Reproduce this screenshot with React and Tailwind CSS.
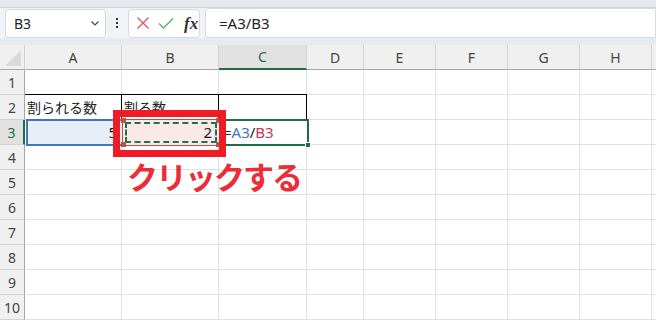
import React from 'react'

const cols = [
    { key: 'A', w: 97 },
    { key: 'B', w: 97 },
    { key: 'C', w: 88 },
    { key: 'D', w: 57 },
    { key: 'E', w: 72 },
    { key: 'F', w: 72 },
    { key: 'G', w: 72 },
    { key: 'H', w: 72 },
    { key: 'I', w: 40 },
]

const rows = [1, 2, 3, 4, 5, 6, 7, 8, 9, 10]

const template = '25px 97px 97px 88px 57px 72px 72px 72px 72px 40px'

const cellText = {
    A2: '割られる数',
    B2: '割る数',
}

const App = () => {
    return (
        <div
            className="relative w-[656px] h-[323px] overflow-hidden bg-white text-[#222]"
            style={{ fontFamily: '"Noto Sans", "Noto Sans CJK JP", sans-serif' }}
        >
            {/* top band */}
            <div className="h-[8px] bg-[#e4e7eb] border-b border-[#cfd3d8]" />

            {/* formula bar */}
            <div className="h-[30px] bg-[#f1f3f6] flex items-center">
                <div className="ml-[5px] w-[101px] h-[29px] bg-white border border-[#d6d9dd] rounded-[4px] flex items-center justify-between pl-[8px] pr-[4px]">
                    <span className="text-[14px] text-[#222]">B3</span>
                    <svg width="12" height="12" viewBox="0 0 12 12" fill="none" stroke="#444" strokeWidth="1.2">
                        <path d="M2.5 4.5 L6 8 L9.5 4.5" />
                    </svg>
                </div>
                <div className="w-[22px] flex flex-col items-center gap-[2px]">
                    <span className="w-[2px] h-[2px] bg-[#333]" />
                    <span className="w-[2px] h-[2px] bg-[#333]" />
                    <span className="w-[2px] h-[2px] bg-[#333]" />
                </div>
                <div className="w-[72px] h-[29px] bg-white border border-[#d6d9dd] rounded-[4px] flex items-center pl-[7px] gap-[8px]">
                    <svg width="14" height="14" viewBox="0 0 14 14" fill="none" stroke="#e0535b" strokeWidth="1.3">
                        <path d="M1.5 1.5 L12.5 12.5 M12.5 1.5 L1.5 12.5" />
                    </svg>
                    <svg width="16" height="14" viewBox="0 0 16 14" fill="none" stroke="#5aad6b" strokeWidth="1.3">
                        <path d="M1 7.5 L5.5 12 L15 2.5" />
                    </svg>
                    <span
                        className="text-[17px] italic font-bold text-[#333] leading-none ml-[2px]"
                        style={{ fontFamily: '"Liberation Serif", serif' }}
                    >
                        fx
                    </span>
                </div>
                <div className="ml-[5px] flex-1 h-[30px] bg-white border border-[#d6d9dd] rounded-l-[4px] flex items-center pl-[13px]">
                    <span className="text-[15px] text-[#222]">=A3/B3</span>
                </div>
            </div>

            {/* gap band */}
            <div className="h-[7px] bg-[#e7ebf0]" />

            {/* grid */}
            <div className="grid" style={{ gridTemplateColumns: template }}>
                {/* header row */}
                <div className="h-[25px] bg-[#f0f0f0] border-b border-[#a8a8a8] border-r border-r-[#d2d2d2] relative">
                    <svg className="absolute right-[3px] bottom-[3px]" width="16" height="16" viewBox="0 0 16 16">
                        <path d="M16 0 L16 16 L0 16 Z" fill="#d9d9d9" />
                    </svg>
                </div>
                {cols.map((c) => (
                    <div
                        key={c.key}
                        className={
                            c.key === 'C'
                                ? 'h-[25px] bg-[#e1e1e1] border-b-2 border-[#1e6e42] border-r border-r-[#d2d2d2] flex items-center justify-center text-[14px] text-[#1e6e42]'
                                : 'h-[25px] bg-[#f0f0f0] border-b border-[#a8a8a8] border-r border-r-[#d2d2d2] flex items-center justify-center text-[14px] text-[#444]'
                        }
                    >
                        {c.key === 'I' ? '' : c.key}
                    </div>
                ))}

                {rows.map((r) => (
                    <React.Fragment key={r}>
                        <div
                            className={
                                r === 3
                                    ? 'h-[25px] bg-[#e1e1e1] border-r-2 border-[#1e6e42] border-b border-b-[#d2d2d2] flex items-center justify-center text-[14px] text-[#1e6e42]'
                                    : 'h-[25px] bg-[#f0f0f0] border-r border-[#a8a8a8] border-b border-b-[#d2d2d2] flex items-center justify-center text-[14px] text-[#444]'
                            }
                        >
                            {r}
                        </div>
                        {cols.map((c) => {
                            const id = c.key + r
                            const inTable = r === 2 && ['A', 'B', 'C'].includes(c.key)
                            return (
                                <div
                                    key={id}
                                    className={
                                        inTable
                                            ? 'h-[25px] border-t border-black border-r border-r-black border-b border-b-[#e1e1e1] flex items-center pl-[2px] text-[14px] whitespace-nowrap overflow-visible'
                                            : 'h-[25px] border-r border-[#e1e1e1] border-b border-b-[#e1e1e1]'
                                    }
                                    style={inTable ? { marginTop: '-1px', height: '26px' } : undefined}
                                >
                                    {cellText[id]}
                                </div>
                            )
                        })}
                    </React.Fragment>
                ))}
            </div>

            {/* A3 selected range */}
            <div className="absolute left-[26px] top-[119px] w-[96px] h-[27px] bg-[#e8eef8] border-y-2 border-l-2 border-[#4472c4] flex items-center justify-end pr-[5px] text-[15px]">
                5
            </div>

            {/* B3 reference cell */}
            <div className="absolute left-[122px] top-[119px] w-[98px] h-[27px] bg-[#f9e9e9] border border-[#c0504d]">
                <div className="absolute inset-[2px] border-2 border-dashed border-[#217346] flex items-center justify-end pr-[3px] text-[15px]">
                    2
                </div>
                <span className="absolute -left-[2px] -top-[2px] w-[5px] h-[5px] bg-[#c0504d]" />
                <span className="absolute -right-[2px] -top-[2px] w-[5px] h-[5px] bg-[#c0504d]" />
                <span className="absolute -left-[2px] -bottom-[2px] w-[5px] h-[5px] bg-[#c0504d]" />
                <span className="absolute -right-[2px] -bottom-[2px] w-[5px] h-[5px] bg-[#c0504d]" />
            </div>

            {/* C3 active cell */}
            <div className="absolute left-[220px] top-[119px] w-[89px] h-[27px] border-2 border-[#1e6e42] bg-white flex items-center text-[15px] pl-[1px]">
                <span className="text-[#222]">=</span>
                <span className="text-[#4472c4]">A3</span>
                <span className="text-[#222]">/</span>
                <span className="text-[#c0395a]">B3</span>
                <span className="absolute -right-[4px] -bottom-[4px] w-[6px] h-[6px] bg-[#1e6e42] border border-white" />
            </div>

            {/* annotation frame */}
            <div className="absolute left-[113px] top-[110px] w-[113px] h-[47px] border-[7px] border-[#ee1c25]" />

            {/* annotation text */}
            <div
                className="absolute left-[127px] top-[154px] text-[31px] font-bold text-[#ec2c36] leading-[44px] tracking-[-2px]"
                style={{ fontFamily: '"Noto Sans CJK JP", sans-serif' }}
            >
                クリックする
            </div>
        </div>
    )
}

export default App
